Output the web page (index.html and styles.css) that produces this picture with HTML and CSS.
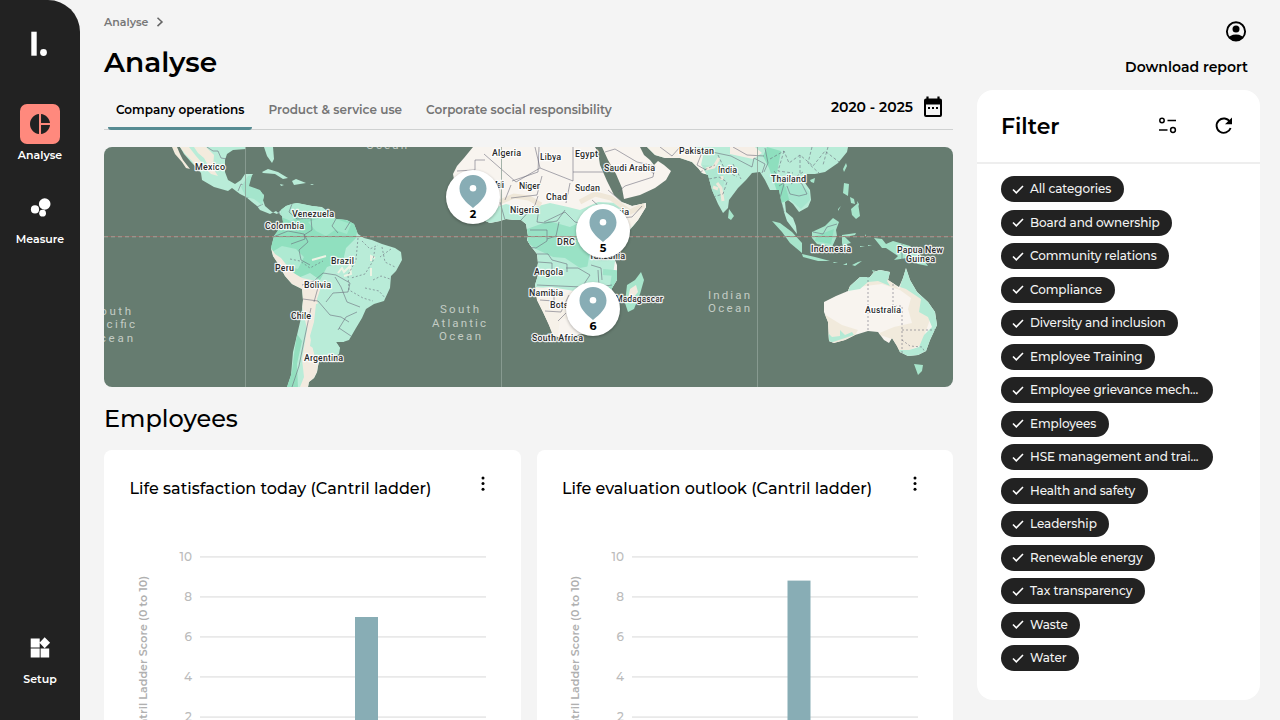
FILE: index.html
```html
<!DOCTYPE html>
<html lang="en">
<head>
<meta charset="utf-8">
<title>Analyse</title>
<link rel="stylesheet" href="styles.css">
</head>
<body>
<div class="app">
  <nav class="sidebar">
    <svg class="logo" width="20" height="28" viewBox="0 0 20 28"><path d="M1.3 1.7h5.4v24H1.3z" fill="#fff"/><circle cx="13.5" cy="22.5" r="3.4" fill="#fff"/></svg>
    <a class="nav-item active">
      <span class="nav-icon"><svg width="24" height="24" viewBox="0 0 24 24"><path d="M11 2v20c-5.070-.5-9-4.790-9-10s3.930-9.500 9-10zm2.030 0v8.990H22c-.47-4.740-4.240-8.520-8.970-8.990zm0 11.010V22c4.740-.47 8.500-4.250 8.970-8.990h-8.970z" fill="#222"/></svg></span>
      <span class="nav-label">Analyse</span>
    </a>
    <a class="nav-item measure">
      <span class="nav-icon"><svg width="24" height="24" viewBox="0 0 24 24" fill="#fff"><circle cx="7" cy="13.400" r="4.100"/><circle cx="14.600" cy="17.200" r="3.400"/><circle cx="16.700" cy="8" r="5.800"/></svg></span>
      <span class="nav-label">Measure</span>
    </a>
    <a class="nav-item setup">
      <span class="nav-icon"><svg width="24" height="24" viewBox="0 0 24 24" fill="#fff"><path d="M12.600 12.500v9h8.600v-9zM2.700 21.500h9v-9h-9zM2.700 2.500v9h9v-9zM16.660 1.290L11.500 6.840 16.660 12.300l5.460-5.460z"/></svg></span>
      <span class="nav-label">Setup</span>
    </a>
  </nav>

  <main class="main">
    <div class="crumbs"><span>Analyse</span><svg width="8" height="10" viewBox="0 0 8 10"><path d="M1.500 .7l4.500 4.200-4.500 4.200" fill="none" stroke="#666" stroke-width="1.500"/></svg></div>
    <h1>Analyse</h1>
    <div class="tabbar">
      <div class="tabs">
        <span class="tab selected">Company operations</span>
        <span class="tab">Product &amp; service use</span>
        <span class="tab">Corporate social responsibility</span>
      </div>
      <div class="period"><span>2020 - 2025</span>
        <svg width="20" height="22" viewBox="0 0 20 22"><path d="M4.500 .5v4M15.500 .5v4" stroke="#000" stroke-width="2.200"/><rect x="2" y="3.500" width="16" height="16.500" rx="1" fill="none" stroke="#000" stroke-width="2"/><path d="M2 3.500h16v5H2z"/><path d="M5 12h2M9 12h2M13 12h2" stroke="#000" stroke-width="1.800"/></svg>
      </div>
    </div>

    <div class="map">
      <svg width="849" height="240" viewBox="104 147 849 240">
        <defs>
          <clipPath id="africa"><path d="M473 147L464 158 457 166 453 174 455 185 458 195 467 208 478 218 490 223 500 221 506 219 514 220 521 220 526 224 528 236 527 240 530 245 537 254 538 263 537 268 538 275 535 285 537 300 543 312 549 325 553 335 558 337 570 337 585 333 600 325 606 310 612 300 612 288 617 280 617 265 613 255 617 244 628 232 638 220 646 207 646 203 632 206 622 202 614 195 607 181 600 165 598 152 595 147z"/></clipPath>
          <clipPath id="sam"><path d="M281 210L286 206 292 204 297 203 302 204 312 206 322 207 326 210 336 219 347 220 354 224 358 234 364 238 372 240 382 244 395 248 401 252 402 260 396 271 391 276 390 288 384 301 374 304 366 309 362 318 356 328 349 340 343 342 336 342 340 348 339 354 333 358 320 358 318 366 317 372 314 378 309 382 308 387 287 387 291 375 293 352 297 335 301 318 303 300 302 289 292 284 285 276 279 265 273 256 271 248 274 236 280 228 283 222z"/></clipPath>
          <clipPath id="asia"><path d="M647 147L655 155 665 158 680 158 692 162 698 168 702 173 708 175 712 190 718 204 723 213 728 208 729 200 738 188 746 180 752 173 760 172 765 180 770 190 779 190 781 200 784 212 787 221 797 234 796 226 793 218 786 212 785 202 788 200 793 204 799 212 808 207 811 200 810 190 803 180 807 174 815 174 825 172 838 163 847 152 848 147z"/></clipPath>
          <clipPath id="aus"><path d="M824 302L836 296 848 291 850 286 860 277 870 277 874 272 880 270 890 272 888 280 899 287 903 278 906 268 910 280 917 292 928 302 935 312 937 325 930 340 926 351 918 355 908 356 900 352 897 346 892 338 889 343 884 340 878 332 868 331 855 335 845 340 834 343 829 341 828 322 824 312z"/></clipPath>
        </defs>
        <rect x="104" y="147" width="849" height="240" fill="#667c70"/>

        <g fill="#b9ecd8">
          <path d="M180 147L184 154 191 162 196 167 201 173 202 180 214 187 228 191 232 188 240 194 246 197 252 202 257 206 260 210 270 214 276 211 283 217 281 210 277 214 272 212 265 206 263 200 264 195 260 191 252 190 247 191 247 183 253 174 245 174 241 180 235 184 228 180 225 172 225 160 227 154 233 150 246 149 246 147z"/>
          <path d="M264 147h9l1 12-2 4-5-7z"/>
          <path d="M262 172l6-3 10 3 10 6-5 1-8-5-12-1zM292 181l4-2 10 4-6 1-6 1zM280 184l4 1-3 1zM310 184l4 0-2 1z"/>
        </g>
        <path d="M172 147h5l3 7 3 6 7 9-4-1-4-6-7-8zM180 147h26l8 8-1 13 5 8-7-2-8-8-7 1-4-6-7-7-5-7z" fill="#f3ebdd"/>
        <path d="M194 147l4 6 6 5 5 9-5-2-8-9-7-9z" fill="#b9ecd8"/>
        <path d="M207 147l6 4 5 0 3 7 6 1M238 191l3-7 6 3M247 198l9-6 7 2M257 207l6-3M278 211l2 3" class="land-line"/>
        <path d="M241 187l7-11 4-1-3 11 11 4 4 6-2 9-8-6-8-2z" fill="#a4e5cc"/>

        <g clip-path="url(#sam)">
          <rect x="265" y="200" width="145" height="190" fill="#b9ecd8"/>
          <path d="M268 205l70 12 20 8-2 13-10 10-3 13-16 6-7 13-10-7-12 5-10-12-15-10-6-20z" fill="#90e0bf"/>
          <path d="M308 222l18-6 13 4 12 4-4 10-12-4-9 6-10-5z" fill="#a4e8cc"/>
          <path d="M281 205l14-3 22 4 8 8-14 5-8-6-12 8-10-4zM272 252l10-6 14 3 8 8-6 12-12-3z" fill="#aeead2"/>
          <path d="M271 248l4 6 6 4 11 14 10 6 14 3 5 6-4 12 2 13-4 8-3 13-2 13 10 6 5 20 3 25h-32l8-20-2-18 5-30-6-27-12-10-12-15z" fill="#f2eadf"/>
          <path d="M316 304l24-3 7 17-3 24-11 16h-18l-5-22 4-14z" fill="#b9ecd8"/>
          <path d="M297 334l-3 20-2 17-7 20 13-3-1-24 5-23z" fill="#93dfbf"/>
          <path d="M312 260l14-4M338 273l4-5 2 4 6-6 1 8-7 2M371 261v-5l4 2M371 268v8" stroke="#edf3e4" stroke-width="2" fill="none"/>
          <path class="land-line" d="M292 204l-3 8 8 7 14-1 1 12-8 5 1 4-14 5M273 237l15-6 16 3 4 8-9 8 2 10 9 5M302 285l12-4 9-8 13 2 14 8-2 9-15 1-7 9M337 217l-5 9 6 7M350 222l-5 8M303 299l15 2 12 14 11 2 8 5M319 284l-5 18M338 330l8-13 11-5M339 328l12 8M311 308l-6 28-6 30-7 21M335 277l6 10 6 15 13 5"/>
          <path class="land-line" stroke-dasharray="2 2" d="M358 238l-2 22-8 15 1 15 14 8 10 3M362 241l8 8 8-4M375 248l-2 13-8 13-14 4M382 247l3 15 10 5M365 288l14 3 7 8M373 280l8-4 9 3M391 249l-11 8M290 259l10 2 10 7 13-7"/>
        </g>

        <g clip-path="url(#africa)">
          <rect x="445" y="147" width="210" height="200" fill="#f8f4ef"/>
          <path d="M460 204l25-1 12 4 9-3 20 5 12-3 12-3 18 4 12 3 18-8 20 1 23 8-6 15-18 23-4 25 2 19-14 6-27-8-23-4-13 1-4 0-10-60-58 3z" fill="#b9ecd8"/>
          <path d="M620 203l30-2-4 12-18 18-10 8-4-10 8-14z" fill="#f7f2ea"/>
          <path d="M527 229l22-8 21 6 15-7 12 10-2 35-15 3-15-10-12-1-17-8-8-6z" fill="#99e2c5"/>
          <path d="M500 202l14-6 15 2 12 7M580 202l15-8 16 4 19 14 14-7" fill="none" stroke="#efe7d8" stroke-width="5"/>
          <path d="M596 240l14 3 5 15-8 17-11 3-9-9 3-17z" fill="#b9ecd8"/>
          <path d="M603 272l12 1-2 13-10 14" fill="none" stroke="#9de4c8" stroke-width="6"/>
          <path d="M536 287l15 2 12 6 15-6 8 2-5 17-8 9-13 3-2 15 9 5-12 1-12-17-7-22z" fill="#f6f1e8"/>
          <path class="land-line" d="M457 171l18-1v-10h10M484 154l32 28 24-14-5-21M505 200l6-15M512 181l26-9 1-25M540 168l33 13V147M573 172h36M542 176l-5 19-26 3M570 183l-4 20M500 202l5 18M521 220l14-15 3-9M539 208l-2 14 8 1 12-2 8-11M544 222l21-10 10 10 14 3M530 230h17v11l-11 7-8-1M547 239l9-3 3-14M536 254h12l4 6 15 4v8M538 262l14 1v9l-16 1M566 268h12l12 7-8 12-45-2M575 240l11-6 5-12M598 270l1 17 13-2M591 265l10 3 1 12M545 311l16 1 8-17M540 300l14 1v-12M566 313l-8 8M587 305l-7 7M592 200l20 18 20-1 10-11M608 190l14 12"/>
        </g>
        <path d="M602 147L608 160 616 174 622 188 624 199 640 195 655 188 666 180 671 171 664 165 658 161 654 165 650 160 644 155 640 147z" fill="#f8f4ef"/>
        <path class="land-line" d="M605 152l10-3 22 13 18 4-2 11-28 9-7 6M646 167l8 7"/>

        <g clip-path="url(#asia)">
          <rect x="640" y="147" width="215" height="90" fill="#b9ecd8"/>
          <path d="M640 147h56l7 9-2 9 6 9-9 1-20-14-34-4z" fill="#f7f2e9"/>
          <path d="M702 165l14 1 9 12-5 24-8-8-5-18z" fill="#aee7d1"/>
          <path d="M717 183l4 5 2 13M706 169l8-2 5-9M713 187l5 2M722 176v4" fill="none" stroke="#efe9db" stroke-width="3"/>
          <path d="M730 147h25l7 6-9 6-23-5z" fill="#f6eee6"/>
          <path d="M767 147l14 4-4 22 10 16 3 11-9 3-12-35-6-12z" fill="#8edfbe"/>
          <path d="M785 184l12-2 12 9 1 9-9 9-12-10z" fill="#a6e6cf"/>
          <path class="land-line" d="M660 147l12 9 8-9M695 147l6 8-4 10 9 5M712 152l19 4 21 11 2-9 11 6-3 9M733 147l14 8 17 1M765 148l3 15-4 9M774 171l10 13-4 14 4 14M779 186l12-8 11 6 5 10-8 2-9-2-3-8M791 184l7-5"/>
          <path class="land-line" stroke-dasharray="3 2" d="M704 180l15-3 8 5-4 12-10 3M718 155l7 15 12 7M700 172l15-7M733 164l8 15M770 159l14-8 5 12 11-8 13 11 12-15 14 11M784 151l-6 20 15 2M800 155v18M812 147l-4 16 11 10M828 147l-5 18M803 172l-9 6"/>
        </g>
        <g fill="#a7e5cb">
          <path d="M641 272l3 8-4 14-6 15-6 3-3-9 2-18 8-5zM729 209l5 7-3 4-3-2zM772 221l8 2 12 9 10 11v10l-12-10-8-11zM802 254l13 3 15 4-12 0-15-4zM833 262l5 0-4 1zM843 265l4-2 0 2zM852 265l6-3 4-1-7 5zM812 232l13-6 8-8 6 4-3 8 1 6-5 11-15-3-5-6zM842 235l14-2-1 2-10 2 6 6-4 1 2 5-5 2-2-8zM844 183l5 1-1 12-5-3zM843 169l3-6 1 3-3 6zM850 197l4 2 1 5-4-1zM838 209l3-3-3 5zM857 201l2 3-1 4zM851 209l7-6 2 13-4 3-4-4zM865 234l2 4-2-2zM860 246l5 0-5 1zM868 245l4 1-4 0zM874 238l8 1 4 5 7-3 17 5 10 9 8 11-10-2-11-6-13 2 4-4-12-8-4 0zM935 250l5-4-2 4zM810 180l5-2-1 5-3-1zM914 364l9 1-1 6-4 4zM872 270l4 1-3 1z"/>
        </g>
        <path d="M816 236l18-7-3 15-16-3z" fill="#8fdfbf"/>
        <path class="land-line" d="M813 232l10 2 4-7 10-3M902 244v15"/>
        <path d="M636 285l2 7-6 7-4 0 2-10z" fill="#f2eadf"/>

        <g clip-path="url(#aus)">
          <rect x="820" y="265" width="120" height="100" fill="#f8f4ef"/>
          <path d="M841 293l18-14 20-11 20 21 7-10 27 32-12 34-21 9-8-15-15-5 17-7 18-4-4-14 3-11-11-8-18-6-17 2zM824 314l18 11 16 5-5 9-24 5z" fill="#f1eadc"/>
          <path d="M851 284l9-7 10-1 7-8 15 4-5 9 3 5-12-5-10 1-8 7-12 2zM900 287l5-20 15 25 20 21-2 20-12 23-15 1-12-2-4-5 14 0 10-3 5-12 8-8-4-10-9-5 2-13-15-10zM828 333l4 4 8-1 0-6 5 5 7-3 2 3-24 8-4-1z" fill="#b4ead5"/>
          <path class="land-line" stroke-dasharray="2 2" d="M868 276v56M893 284v22h9v50M902 330h34M902 340l8 6 12 1 4 7"/>
        </g>

        <path d="M245.500 147v240M501.500 147v240M757.500 147v240" stroke="#8fa298" stroke-width=".8"/>
        <path d="M104 236.500h849" stroke="#9c6c66" stroke-width=".8"/>
        <path d="M104 236.800h849" stroke="#a7aea5" stroke-width=".8" stroke-dasharray="4 3"/>

        <g class="sea">
          <text x="91" y="315" textLength="40">South</text><text x="88" y="328" textLength="47">Pacific</text><text x="89" y="342" textLength="44">Ocean</text>
          <text x="366" y="149" textLength="41">Ocean</text>
          <text x="440" y="313" textLength="39">South</text><text x="432" y="327" textLength="54">Atlantic</text><text x="439" y="340" textLength="42">Ocean</text>
          <text x="708" y="299" textLength="42">Indian</text><text x="708" y="312" textLength="42">Ocean</text>
        </g>
        <g class="land">
          <text x="195" y="170" textLength="30">Mexico</text>
          <text x="292" y="217" textLength="42">Venezuela</text><text x="265" y="229" textLength="39">Colombia</text>
          <text x="275" y="271" textLength="19">Peru</text><text x="331" y="264" textLength="23">Brazil</text>
          <text x="304" y="288" textLength="27">Bolivia</text><text x="291" y="319" textLength="20">Chile</text><text x="304" y="361" textLength="39">Argentina</text>
          <text x="492" y="156" textLength="29">Algeria</text><text x="540" y="160" textLength="21">Libya</text><text x="575" y="156.500" textLength="23">Egypt</text>
          <text x="604" y="171" textLength="51">Saudi Arabia</text><text x="679" y="154" textLength="35">Pakistan</text><text x="718" y="173" textLength="19">India</text>
          <text x="490" y="188" textLength="14">Mali</text><text x="519" y="189" textLength="21">Niger</text><text x="575" y="191" textLength="25">Sudan</text><text x="546" y="200" textLength="21">Chad</text>
          <text x="510" y="213" textLength="29">Nigeria</text><text x="596" y="215" textLength="33">Ethiopia</text><text x="557" y="245" textLength="18">DRC</text><text x="589" y="258.500" textLength="36">Tanzania</text>
          <text x="534" y="275" textLength="29">Angola</text><text x="529" y="296" textLength="34">Namibia</text><text x="550" y="308" textLength="40">Botswana</text><text x="615" y="302" textLength="48">Madagascar</text><text x="532" y="341" textLength="51">South Africa</text>
          <text x="771" y="182" textLength="35">Thailand</text><text x="811" y="252" textLength="40">Indonesia</text>
          <text x="897" y="253" textLength="46">Papua New</text><text x="906" y="262" textLength="29">Guinea</text><text x="865" y="313" textLength="36">Australia</text>
        </g>
      </svg>
      <div class="pin pin-west"><svg width="28" height="33" viewBox="0 0 28 33"><path d="M14 0C6.300 0 .5 5.900.5 13.400.5 21.500 7 27 14 33c7-6 13.500-11.500 13.500-19.600C27.500 5.900 21.700 0 14 0z" fill="#88adb5"/><circle cx="14" cy="13.200" r="3.300" fill="#fff"/></svg><b>2</b></div>
      <div class="pin pin-east"><svg width="28" height="33" viewBox="0 0 28 33"><path d="M14 0C6.300 0 .5 5.900.5 13.400.5 21.500 7 27 14 33c7-6 13.500-11.500 13.500-19.600C27.500 5.900 21.700 0 14 0z" fill="#88adb5"/><circle cx="14" cy="13.200" r="3.300" fill="#fff"/></svg><b>5</b></div>
      <div class="pin pin-south"><svg width="28" height="33" viewBox="0 0 28 33"><path d="M14 0C6.300 0 .5 5.900.5 13.400.5 21.500 7 27 14 33c7-6 13.500-11.500 13.500-19.600C27.500 5.900 21.700 0 14 0z" fill="#88adb5"/><circle cx="14" cy="13.200" r="3.300" fill="#fff"/></svg><b>6</b></div>
    </div>

    <h2>Employees</h2>
    <div class="cards">
      <section class="card">
        <header><h3>Life satisfaction today (Cantril ladder)</h3><svg width="4" height="16" viewBox="0 0 4 16"><circle cx="2" cy="2" r="1.500"/><circle cx="2" cy="7.600" r="1.500"/><circle cx="2" cy="13.200" r="1.500"/></svg></header>
        <svg class="chart" width="416" height="200" viewBox="0 0 416 200">
          <path d="M96 26.800h286M96 66.800h286M96 106.800h286M96 146.800h286M96 187.200h286" stroke="#e9e9e9" stroke-width="1.700"/>
          <rect x="251" y="87" width="23" height="113" fill="#88adb5"/>
          <g class="ticks"><text x="88" y="30.500">10</text><text x="88" y="70.500">8</text><text x="88" y="110.500">6</text><text x="88" y="150.500">4</text><text x="88" y="190.500">2</text></g>
          <text class="axis" transform="translate(43 211) rotate(-90)" textLength="165">Cantril Ladder Score (0 to 10)</text>
        </svg>
      </section>
      <section class="card">
        <header><h3>Life evaluation outlook (Cantril ladder)</h3><svg width="4" height="16" viewBox="0 0 4 16"><circle cx="2" cy="2" r="1.500"/><circle cx="2" cy="7.600" r="1.500"/><circle cx="2" cy="13.200" r="1.500"/></svg></header>
        <svg class="chart" width="416" height="200" viewBox="1 0 416 200">
          <path d="M96 26.800h286M96 66.800h286M96 106.800h286M96 146.800h286M96 187.200h286" stroke="#e9e9e9" stroke-width="1.700"/>
          <rect x="251.500" y="50.600" width="23" height="150" fill="#88adb5"/>
          <g class="ticks"><text x="88" y="30.500">10</text><text x="88" y="70.500">8</text><text x="88" y="110.500">6</text><text x="88" y="150.500">4</text><text x="88" y="190.500">2</text></g>
          <text class="axis" transform="translate(43 211) rotate(-90)" textLength="165">Cantril Ladder Score (0 to 10)</text>
        </svg>
      </section>
    </div>
  </main>

  <aside class="side">
    <svg class="user" width="24" height="24" viewBox="0 0.600 24 24"><defs><clipPath id="face"><circle cx="12" cy="12" r="9"/></clipPath></defs><circle cx="12" cy="12" r="9.100" fill="none" stroke="#000" stroke-width="1.900"/><circle cx="12" cy="9.500" r="3.500"/><ellipse cx="12" cy="19.700" rx="8" ry="4.500" clip-path="url(#face)"/></svg>
    <div class="download">Download report</div>
    <section class="filter">
      <header><h2 class="filter-title">Filter</h2>
        <svg class="tune" width="20" height="18" viewBox="0 0 20 18" fill="none" stroke="#000" stroke-width="1.500"><circle cx="4" cy="3.500" r="2.200"/><path d="M9.500 3.500h8.500M1 13h8.500"/><circle cx="15" cy="13" r="2.400"/></svg>
        <svg width="18" height="18" viewBox="0 0 18 18"><path d="M15 5A7.200 7.200 0 1 0 15.600 11" fill="none" stroke="#000" stroke-width="1.900"/><path d="M10 7.300h7V.5z"/></svg>
      </header>
      <ul class="chips">
        <li><svg viewBox="0 0 12 9"><path d="M1 4.500l3.300 3.300L11 1"/></svg><span>All categories</span></li>
        <li><svg viewBox="0 0 12 9"><path d="M1 4.500l3.300 3.300L11 1"/></svg><span>Board and ownership</span></li>
        <li><svg viewBox="0 0 12 9"><path d="M1 4.500l3.300 3.300L11 1"/></svg><span>Community relations</span></li>
        <li><svg viewBox="0 0 12 9"><path d="M1 4.500l3.300 3.300L11 1"/></svg><span>Compliance</span></li>
        <li><svg viewBox="0 0 12 9"><path d="M1 4.500l3.300 3.300L11 1"/></svg><span>Diversity and inclusion</span></li>
        <li><svg viewBox="0 0 12 9"><path d="M1 4.500l3.300 3.300L11 1"/></svg><span>Employee Training</span></li>
        <li class="long"><svg viewBox="0 0 12 9"><path d="M1 4.500l3.300 3.300L11 1"/></svg><span>Employee grievance mech...</span></li>
        <li><svg viewBox="0 0 12 9"><path d="M1 4.500l3.300 3.300L11 1"/></svg><span>Employees</span></li>
        <li class="long"><svg viewBox="0 0 12 9"><path d="M1 4.500l3.300 3.300L11 1"/></svg><span>HSE management and trai...</span></li>
        <li><svg viewBox="0 0 12 9"><path d="M1 4.500l3.300 3.300L11 1"/></svg><span>Health and safety</span></li>
        <li><svg viewBox="0 0 12 9"><path d="M1 4.500l3.300 3.300L11 1"/></svg><span>Leadership</span></li>
        <li><svg viewBox="0 0 12 9"><path d="M1 4.500l3.300 3.300L11 1"/></svg><span>Renewable energy</span></li>
        <li><svg viewBox="0 0 12 9"><path d="M1 4.500l3.300 3.300L11 1"/></svg><span>Tax transparency</span></li>
        <li><svg viewBox="0 0 12 9"><path d="M1 4.500l3.300 3.300L11 1"/></svg><span>Waste</span></li>
        <li><svg viewBox="0 0 12 9"><path d="M1 4.500l3.300 3.300L11 1"/></svg><span>Water</span></li>
      </ul>
    </section>
  </aside>
</div>
</body>
</html>
```
FILE: styles.css
```css
* { box-sizing: border-box; }
body { margin: 0; background: #f4f4f4; color: #000; font-family: Montserrat, Inter, "Open Sans", sans-serif; overflow: hidden; }
svg { display: block; flex: none; }
h1, h2, h3 { margin: 0; font-weight: 500; white-space: nowrap; }
.app { display: flex; height: 720px; overflow: hidden; }

.sidebar { width: 80px; height: 720px; flex: none; background: #222; border-top-right-radius: 32px; display: flex; flex-direction: column; align-items: center; padding-top: 30px; }
.nav-item { display: flex; flex-direction: column; align-items: center; width: 80px; color: #fff; margin-top: 46px; }
.nav-icon { width: 40px; height: 40px; border-radius: 7px; display: flex; align-items: center; justify-content: center; }
.active .nav-icon { background: #ff897d; }
.nav-label { font-size: 11px; font-weight: 600; line-height: 14px; margin-top: 4px; white-space: nowrap; }
.measure { margin-top: 26px; }
.setup { margin-top: auto; margin-bottom: 34px; }

.main { width: 849px; flex: none; margin-left: 24px; }
.crumbs { display: flex; align-items: center; gap: 8px; padding-top: 14px; height: 30px; font-size: 11px; font-weight: 600; color: #777; }
h1 { font-size: 28px; line-height: 34px; margin-top: 15px; font-weight: 600; }
.tabbar { display: flex; justify-content: space-between; height: 51px; border-bottom: 1px solid #cfd1d1; }
.tabs { display: flex; padding-left: 4px; }
.tab { height: 51px; padding: 23px 8px 0; margin-right: 8px; font-size: 12px; font-weight: 600; line-height: 16px; color: #757575; white-space: nowrap; }
.selected { color: #000; background: linear-gradient(#568b92, #568b92) bottom / 100% 3px no-repeat; border-radius: 3px; }
.period { display: flex; align-items: center; gap: 10px; height: 56px; padding-right: 10px; font-size: 14px; font-weight: 600; }
.map { position: relative; width: 849px; height: 240px; margin-top: 17px; border-radius: 8px; overflow: hidden; }
.land-line { fill: none; stroke: #667; stroke-width: .7; opacity: .8; }
.land { font: 500 9px Roboto, sans-serif; fill: #2b2b2b; stroke: rgba(255,255,255,.85); stroke-width: 2.400px; stroke-linejoin: round; paint-order: stroke; }
.sea { font: 400 11.500px Roboto, sans-serif; fill: #c4ccc5; }
.pin { position: absolute; width: 54px; height: 54px; border-radius: 50%; background: #fff; box-shadow: 0 1px 3px rgba(0,0,0,.3); display: flex; flex-direction: column; align-items: center; padding-top: 5px; }
.pin b { font-size: 11px; line-height: 12px; }
.pin-west { left: 342px; top: 23px; }
.pin-east { left: 472px; top: 57px; }
.pin-south { left: 462px; top: 135px; }
.main h2 { font-size: 24px; line-height: 32px; font-weight: 500; margin-top: 16px; }
.cards { display: flex; gap: 16px; margin-top: 15px; }
.card { width: 416.500px; height: 290px; background: #fff; border-radius: 8px; }
.card header { display: flex; justify-content: space-between; height: 80px; padding: 26px 36px 0 25.500px; }
.card h3 { font-size: 16px; line-height: 26px; font-weight: 500; }
.ticks { font-size: 12px; font-weight: 500; fill: #bbb; text-anchor: end; }
.axis { font-size: 11px; font-weight: 600; fill: #b0b0b0; }

.side { width: 283px; margin-left: 24px; display: flex; flex-direction: column; }
.user { margin: 20px 12px 0 auto; }
.download { margin: 14px 12px 0 auto; font-size: 14px; line-height: 18px; font-weight: 600; white-space: nowrap; }
.filter { margin-top: 14px; height: 610px; background: #fff; border-radius: 16px; }
.filter header { display: flex; align-items: center; height: 74px; padding: 0 27px 0 24px; border-bottom: 2px solid #eee; }
.filter-title { font-size: 22px; line-height: 28px; margin-right: auto; font-weight: 600; padding-top: 1px; }
.tune { margin-right: 37px; }
.chips { list-style: none; margin: 0; padding: 12px 0 0 24px; display: flex; flex-direction: column; align-items: flex-start; gap: 7.500px; }
.chips li { display: flex; align-items: center; height: 26px; padding: 0 12.500px 1px 11px; background: #222; border-radius: 13px; color: #f3f3f3; font-size: 12px; font-weight: 500; letter-spacing: -.08px; white-space: nowrap; }
.chips .long { width: 212px; }
.chips svg { width: 12px; height: 9px; margin-right: 6px; position: relative; top: .5px; }
.chips path { fill: none; stroke: #fff; stroke-width: 1.600; }
```
